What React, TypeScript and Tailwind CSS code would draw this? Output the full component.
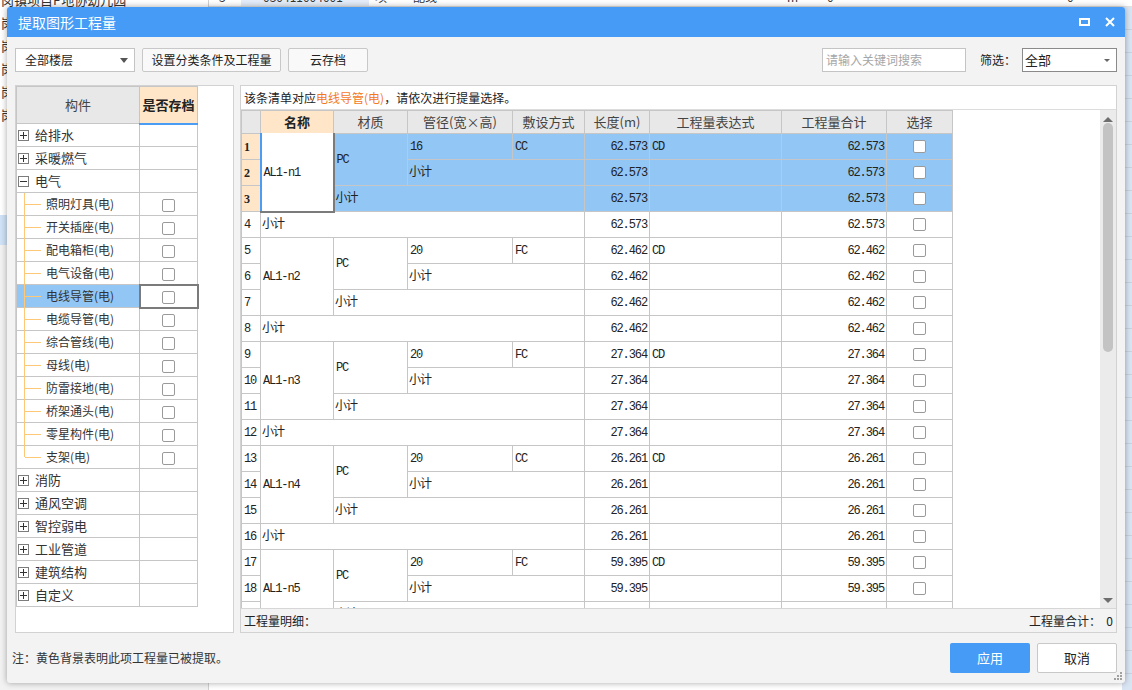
import React from "react";

const UI = "font-['Noto_Sans_CJK_SC','Microsoft_YaHei',sans-serif]";
const MONO = "font-['Liberation_Mono','Noto_Sans_CJK_SC',monospace]";

function Box() {
  return <span className="inline-block w-[13px] h-[13px] border border-[#9a9a9a] rounded-[2px] bg-white align-middle" />;
}

function Expander({ open }: { open?: boolean }) {
  return (
    <span className="relative inline-block w-[11px] h-[11px] border border-[#7c7c7c] bg-white shrink-0">
      <span className="absolute left-[1px] right-[1px] top-[4px] h-px bg-[#333]" />
      {!open && <span className="absolute top-[1px] bottom-[1px] left-[4px] w-px bg-[#333]" />}
    </span>
  );
}

type TreeRow = { label: string; kind: "group" | "open" | "child"; last?: boolean; selected?: boolean };
const tree: TreeRow[] = [
  { label: "给排水", kind: "group" },
  { label: "采暖燃气", kind: "group" },
  { label: "电气", kind: "open" },
  { label: "照明灯具(电)", kind: "child" },
  { label: "开关插座(电)", kind: "child" },
  { label: "配电箱柜(电)", kind: "child" },
  { label: "电气设备(电)", kind: "child" },
  { label: "电线导管(电)", kind: "child", selected: true },
  { label: "电缆导管(电)", kind: "child" },
  { label: "综合管线(电)", kind: "child" },
  { label: "母线(电)", kind: "child" },
  { label: "防雷接地(电)", kind: "child" },
  { label: "桥架通头(电)", kind: "child" },
  { label: "零星构件(电)", kind: "child" },
  { label: "支架(电)", kind: "child", last: true },
  { label: "消防", kind: "group" },
  { label: "通风空调", kind: "group" },
  { label: "智控弱电", kind: "group" },
  { label: "工业管道", kind: "group" },
  { label: "建筑结构", kind: "group" },
  { label: "自定义", kind: "group" },
];

const groups = [
  { name: "AL1-n1", dia: "16", m: "CC", v: "62.573" },
  { name: "AL1-n2", dia: "20", m: "FC", v: "62.462" },
  { name: "AL1-n3", dia: "20", m: "FC", v: "27.364" },
  { name: "AL1-n4", dia: "20", m: "CC", v: "26.261" },
  { name: "AL1-n5", dia: "20", m: "FC", v: "59.395" },
];

const bd = "border border-[#c6c6c6]";

function LeftPanel() {
  return (
    <div className="w-[219px] h-full bg-white border border-[#d2d2d2]">
      <table className="border-collapse table-fixed w-[181px] text-[12px] text-[#333]">
        <colgroup>
          <col className="w-[123px]" />
          <col className="w-[58px]" />
        </colgroup>
        <thead>
          <tr className="h-[37px]">
            <th className={`${bd} bg-[#e8e8e8] font-normal text-[13px] text-[#444]`}>构件</th>
            <th className={`${bd} border-b-2 border-b-[#4a9cf5] bg-[#ffe6c8] font-bold text-[13px] text-[#222]`}>是否存档</th>
          </tr>
        </thead>
        <tbody>
          {tree.map((r, i) => (
            <tr key={i} className="h-[23px]">
              <td className={`${bd} p-0 relative ${r.selected ? "bg-[#92c6f4]" : ""}`}>
                {r.kind === "child" ? (
                  <div className="relative h-[22px] flex items-center">
                    <span className={`absolute left-[7px] top-0 w-px bg-[#ffc877] ${r.last ? "h-[11px]" : "h-[23px]"}`} />
                    <span className="absolute left-[8px] top-[11px] w-[16px] h-px bg-[#ffc877]" />
                    <span className="pl-[29px]">{r.label}</span>
                  </div>
                ) : (
                  <div className="h-[22px] flex items-center pl-[1px] gap-[6px]">
                    <Expander open={r.kind === "open"} />
                    <span className="text-[13px]">{r.label}</span>
                  </div>
                )}
              </td>
              <td className={`${r.selected ? "border-2 border-[#7b7b7b]" : bd} p-0 text-center`}>
                {r.kind === "child" && <Box />}
              </td>
            </tr>
          ))}
        </tbody>
      </table>
    </div>
  );
}

function Grid() {
  const rows: React.ReactNode[] = [];
  let n = 1;
  groups.forEach((g, gi) => {
    const sel = gi === 0;
    const cellBg = sel ? "bg-[#92c6f4]" : "bg-white";
    const numCell = (num: number, s: boolean) => (
      <td className={`${bd} pl-[2px] ${s ? "bg-[#ffe6c8] font-bold font-['Liberation_Serif',serif] text-[12px] tracking-normal" : "bg-white"}`}>{num}</td>
    );
    const val = "text-right pr-[2px]";
    rows.push(
      <tr key={`${gi}a`} className="h-[26px]">
        {numCell(n++, sel)}
        <td rowSpan={3} className={`${sel ? "border-2 border-[#7b7b7b] border-l-[#4a9cf5] border-t-[#ffffff]" : bd} bg-white pl-[2px]`}>{g.name}</td>
        <td rowSpan={2} className={`${bd} ${cellBg} pl-[2px]`}>PC</td>
        <td className={`${bd} ${cellBg} pl-[2px]`}>{g.dia}</td>
        <td className={`${bd} ${cellBg} pl-[2px]`}>{g.m}</td>
        <td className={`${bd} ${cellBg} ${val}`}>{g.v}</td>
        <td className={`${bd} ${cellBg} pl-[2px]`}>CD</td>
        <td className={`${bd} ${cellBg} ${val}`}>{g.v}</td>
        <td className={`${bd} ${cellBg} text-center`}><Box /></td>
      </tr>
    );
    rows.push(
      <tr key={`${gi}b`} className="h-[26px]">
        {numCell(n++, sel)}
        <td colSpan={2} className={`${bd} ${cellBg} pl-[1px]`}>小计</td>
        <td className={`${bd} ${cellBg} ${val}`}>{g.v}</td>
        <td className={`${bd} ${cellBg}`} />
        <td className={`${bd} ${cellBg} ${val}`}>{g.v}</td>
        <td className={`${bd} ${cellBg} text-center`}><Box /></td>
      </tr>
    );
    rows.push(
      <tr key={`${gi}c`} className="h-[26px]">
        {numCell(n++, sel)}
        <td colSpan={3} className={`${bd} ${cellBg} pl-[1px]`}>小计</td>
        <td className={`${bd} ${cellBg} ${val}`}>{g.v}</td>
        <td className={`${bd} ${cellBg}`} />
        <td className={`${bd} ${cellBg} ${val}`}>{g.v}</td>
        <td className={`${bd} ${cellBg} text-center`}><Box /></td>
      </tr>
    );
    rows.push(
      <tr key={`${gi}d`} className="h-[26px]">
        {numCell(n++, false)}
        <td colSpan={4} className={`${bd} bg-white pl-[1px]`}>小计</td>
        <td className={`${bd} bg-white ${val}`}>{g.v}</td>
        <td className={`${bd} bg-white`} />
        <td className={`${bd} bg-white ${val}`}>{g.v}</td>
        <td className={`${bd} bg-white text-center`}><Box /></td>
      </tr>
    );
  });

  return (
    <div className="flex h-[498px] bg-white">
      <div className="flex-1 overflow-hidden">
        <table className={`border-collapse table-fixed w-[711px] text-[12px] tracking-[-1.1px] text-[#222] ${MONO}`}>
          <colgroup>
            <col className="w-[19px]" />
            <col className="w-[73px]" />
            <col className="w-[74px]" />
            <col className="w-[105px]" />
            <col className="w-[72px]" />
            <col className="w-[65px]" />
            <col className="w-[132px]" />
            <col className="w-[105px]" />
            <col className="w-[66px]" />
          </colgroup>
          <thead>
            <tr className={`h-[23px] text-[13px] tracking-normal ${UI}`}>
              <th className={`${bd} bg-[#e8e8e8]`} />
              <th className={`${bd} bg-[#ffe6c8] font-bold text-[#222]`}>名称</th>
              <th className={`${bd} bg-[#e8e8e8] font-normal text-[#444]`}>材质</th>
              <th className={`${bd} bg-[#e8e8e8] font-normal text-[#444]`}>管径(宽×高)</th>
              <th className={`${bd} bg-[#e8e8e8] font-normal text-[#444]`}>敷设方式</th>
              <th className={`${bd} bg-[#e8e8e8] font-normal text-[#444]`}>长度(m)</th>
              <th className={`${bd} bg-[#e8e8e8] font-normal text-[#444]`}>工程量表达式</th>
              <th className={`${bd} bg-[#e8e8e8] font-normal text-[#444]`}>工程量合计</th>
              <th className={`${bd} bg-[#e8e8e8] font-normal text-[#444]`}>选择</th>
            </tr>
          </thead>
          <tbody>{rows}</tbody>
        </table>
      </div>
      <div className="w-[16px] bg-[#ebebeb] flex flex-col items-center">
        <div className="h-[12px] flex items-end">
          <span className="w-0 h-0 border-l-[5px] border-r-[5px] border-b-[5px] border-l-transparent border-r-transparent border-b-[#6e6e6e]" />
        </div>
        <div className="mt-[1px] w-[10px] h-[229px] rounded-[5px] bg-[#c3c3c3]" />
        <div className="flex-1" />
        <div className="h-[12px] flex items-start pt-[2px]">
          <span className="w-0 h-0 border-l-[5px] border-r-[5px] border-t-[5px] border-l-transparent border-r-transparent border-t-[#6e6e6e]" />
        </div>
      </div>
    </div>
  );
}

function Background() {
  const rowsL = Array.from({ length: 6 });
  const rowsR = Array.from({ length: 31 });
  return (
    <div className={`w-[1132px] h-[690px] bg-[#f2f2f2] flex ${UI} text-[13px] text-[#333]`}>
      <div className="w-[208px] flex flex-col -mt-[12px] bg-white">
        {rowsL.map((_, i) => (
          <div key={i} className="h-[23px] flex items-center pl-[1px] whitespace-nowrap overflow-hidden">
            岗镇项目P地协幼儿园
          </div>
        ))}
        <div className="h-[89px]" />
        <div className="h-[30px] bg-[#cfe2f6]" />
        <div className="flex-1 bg-[#f2f2f2]" />
      </div>
      <div className="flex-1 flex flex-col -mt-[12px] border-l border-[#d0d0d0] bg-white">
        <div className="h-[23px] flex items-center border-b border-[#e2e2e2] text-[12px] whitespace-nowrap">
          <span className="w-[32px] pl-[10px]">3</span>
          <span className="w-[128px] pl-[22px] bg-[#e3ecf8]">030411004001</span>
          <span className="w-[38px] pl-[6px]">项</span>
          <span className="w-[380px] pl-[6px]">配线</span>
          <span className="w-[40px]">m</span>
          <span className="w-[240px]">0</span>
          <span>0</span>
        </div>
        <div className="flex-1 flex">
          <div className="flex-1" />
          <div className="w-[10px] bg-[#dae5f4] flex flex-col">
            {rowsR.map((_, i) => (
              <div key={i} className="h-[23px] border-b border-[#c9d3e0]" />
            ))}
          </div>
        </div>
      </div>
    </div>
  );
}

export default function App() {
  return (
    <div className={`relative w-[1132px] h-[690px] overflow-hidden ${UI}`}>
      <Background />
      <div className="absolute left-[7px] top-[7px] w-[1118px] h-[676px] bg-[#f3f3f3] rounded-[3px] shadow-[0_0_6px_rgba(0,0,0,0.35)] flex flex-col overflow-hidden">
        <div className="h-[30px] bg-[#459bf6] flex items-center justify-between pl-[11px] pr-[10px]">
          <span className="text-white text-[14px]">提取图形工程量</span>
          <div className="flex items-center gap-[15px]">
            <span className="w-[11px] h-[8px] border-2 border-white" />
            <svg width="10" height="10" viewBox="0 0 10 10">
              <path d="M1 1 L9 9 M9 1 L1 9" stroke="white" strokeWidth="2" />
            </svg>
          </div>
        </div>

        <div className="px-[8px]">
          <div className="mt-[11px] h-[24px] flex items-center text-[12px] text-[#222]">
            <div className="w-[120px] h-full bg-white border border-[#c4c4c4] flex items-center justify-between pl-[9px] pr-[6px]">
              <span>全部楼层</span>
              <span className="w-0 h-0 border-l-[4px] border-r-[4px] border-t-[5px] border-l-transparent border-r-transparent border-t-[#555]" />
            </div>
            <div className="ml-[7px] w-[139px] h-full bg-[#f9f9f9] border border-[#c8c8c8] rounded-[2px] flex items-center justify-center">设置分类条件及工程量</div>
            <div className="ml-[7px] w-[80px] h-full bg-[#f9f9f9] border border-[#c8c8c8] rounded-[2px] flex items-center justify-center">云存档</div>
            <div className="flex-1" />
            <div className="w-[144px] h-full bg-white border border-[#c4c4c4] flex items-center pl-[3px] text-[#a6a6a6]">请输入关键词搜索</div>
            <span className="ml-[14px] w-[42px]">筛选：</span>
            <div className="w-[95px] h-full bg-white border border-[#8a8a8a] flex items-center justify-between pl-[2px] pr-[6px] text-[13px]">
              <span>全部</span>
              <span className="w-0 h-0 border-l-[3px] border-r-[3px] border-t-[3px] border-l-transparent border-r-transparent border-t-[#666]" />
            </div>
          </div>

          <div className="mt-[13px] h-[548px] flex gap-[6px]">
            <LeftPanel />
            <div className="flex-1 h-full flex flex-col border border-[#d2d2d2] bg-[#f3f3f3]">
              <div className="h-[24px] bg-white border-b border-[#dcdcdc] flex items-center pl-[3px] text-[12px] text-[#222]">
                该条清单对应<span className="text-[#f47a1e]">电线导管(电)</span>，请依次进行提量选择。
              </div>
              <Grid />
              <div className="flex-1 border-t border-[#d6d6d6] flex items-center justify-between pl-[3px] pr-[3px] text-[12px] text-[#222]">
                <span>工程量明细：</span>
                <span>工程量合计：&nbsp;&nbsp;0</span>
              </div>
            </div>
          </div>
        </div>

        <div className="mt-[10px] h-[30px] flex items-center justify-between pl-[5px] pr-[8px]">
          <span className="text-[12px] text-[#333]">注：黄色背景表明此项工程量已被提取。</span>
          <div className="flex gap-[7px] text-[13px]">
            <div className="w-[80px] h-[30px] rounded-[2px] bg-[#459bf6] text-white flex items-center justify-center">应用</div>
            <div className="w-[80px] h-[30px] rounded-[2px] bg-white border border-[#c8c8c8] text-[#222] flex items-center justify-center">取消</div>
          </div>
        </div>
        <svg className="absolute right-[2px] bottom-[2px]" width="9" height="9" viewBox="0 0 9 9">
          <g fill="#a0a0a0">
            <rect x="6" y="0" width="2" height="2" />
            <rect x="3" y="3" width="2" height="2" />
            <rect x="6" y="3" width="2" height="2" />
            <rect x="0" y="6" width="2" height="2" />
            <rect x="3" y="6" width="2" height="2" />
            <rect x="6" y="6" width="2" height="2" />
          </g>
        </svg>
      </div>
    </div>
  );
}
